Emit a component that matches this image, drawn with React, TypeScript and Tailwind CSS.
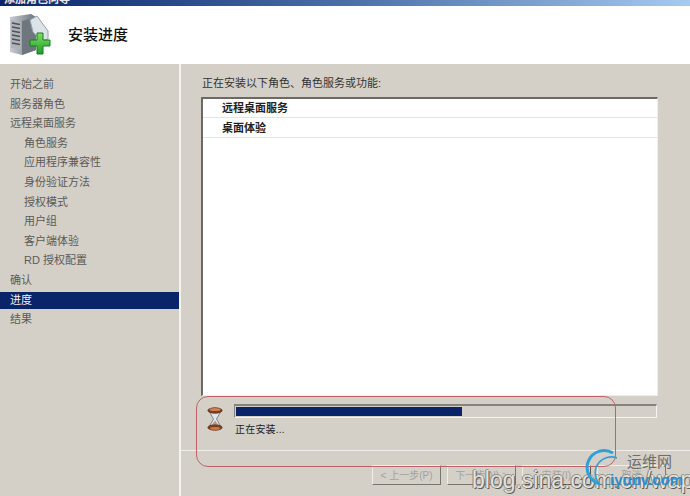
const FONT = "font-['Liberation_Sans','Noto_Sans_CJK_SC',sans-serif]";

function SideItem({ label, indent, active }: { label: string; indent?: boolean; active?: boolean }) {
  return (
    <div
      className={`text-[11px] whitespace-nowrap ${indent ? 'pl-6' : 'pl-2.5'} ${
        active
          ? 'h-[17px] leading-[17px] mt-[1px] mb-[1.6px] bg-[#0a246a] text-[#f2f2f2]'
          : 'h-[19.6px] leading-[19.6px] text-[#5c5a56]'
      }`}
    >
      {label}
    </div>
  );
}

function Btn({ label, bold }: { label: string; bold?: boolean }) {
  return (
    <div
      className={`w-[69px] h-[20px] flex items-center justify-center text-[10px] text-[#a3a19c] border-t border-l border-t-[#efede8] border-l-[#efede8] border-r border-b ${
        bold ? 'border-r-[#55544f] border-b-[#55544f]' : 'border-r-[#77766f] border-b-[#77766f]'
      } whitespace-nowrap`}
    >
      {label}
    </div>
  );
}

function ServerIcon() {
  return (
    <svg width="46" height="46" viewBox="0 0 46 46">
      <defs>
        <linearGradient id="s" x1="0" x2="1">
          <stop offset="0" stopColor="#c8ccd2" />
          <stop offset="1" stopColor="#6c7279" />
        </linearGradient>
        <linearGradient id="g" x1="0" y1="0" x2="0" y2="1">
          <stop offset="0" stopColor="#7fe05a" />
          <stop offset="1" stopColor="#1e9c2d" />
        </linearGradient>
      </defs>
      <path d="M1 5 L22 2 L27 5 L27 38 L13 43 L1 40 Z" fill="url(#s)" />
      <path d="M13 9 L27 5 L27 38 L13 43 Z" fill="#70767d" />
      <path d="M2 8 L12 10 L12 38 L2 36 Z" fill="#aeb3b9" />
      <path d="M3 11 L11 12.5 M3 15 L11 16.5 M3 19 L11 20.5 M3 23 L11 24.5 M3 27 L11 28.5 M3 31 L11 32.5" stroke="#4d5359" strokeWidth="1.4" />
      <path d="M21 8 L28 4 L39 19 L39 27 L32 29 L24 20 Z" fill="#dce3e8" stroke="#98a2ab" strokeWidth="1" />
      <path d="M27 21 H33 V28 H40 V34 H33 V42 H27 V34 H20 V28 H27 Z" transform="translate(1 0)" fill="url(#g)" stroke="#167a24" strokeWidth="1" />
    </svg>
  );
}

function Hourglass() {
  return (
    <svg width="16" height="24" viewBox="0 0 16 24">
      <path d="M2.5 5 L13.5 5 L9.5 12 L13.5 19 L2.5 19 L6.5 12 Z" fill="#dfe6ec" stroke="#7c868e" strokeWidth="1" />
      <path d="M5 17.5 L11 17.5 L8 13.5 Z" fill="#b89a6c" />
      <ellipse cx="8" cy="3.5" rx="7.5" ry="3.2" fill="#7a3d20" />
      <ellipse cx="8" cy="2.6" rx="5.5" ry="1.5" fill="#c9825a" />
      <ellipse cx="8" cy="20.5" rx="7.5" ry="3.2" fill="#7a3d20" />
      <ellipse cx="8" cy="21.5" rx="5" ry="1.4" fill="#c47c4c" />
    </svg>
  );
}

export default function App() {
  const items: [string, boolean?, boolean?][] = [
    ['开始之前'],
    ['服务器角色'],
    ['远程桌面服务'],
    ['角色服务', true],
    ['应用程序兼容性', true],
    ['身份验证方法', true],
    ['授权模式', true],
    ['用户组', true],
    ['客户端体验', true],
    ['RD 授权配置', true],
    ['确认'],
    ['进度', false, true],
    ['结果'],
  ];
  return (
    <div className={`${FONT} relative w-[690px] h-[496px] overflow-hidden flex flex-col bg-[#d4d0c8]`}>
      <div className="h-[6px] shrink-0 overflow-hidden bg-gradient-to-r from-[#0a246a] via-[#4a6fa8] to-[#a6caf0]">
        <div className="text-[11px] leading-[11px] font-bold text-[#e8e8e8] pl-1 -mt-[6px]">添加角色向导</div>
      </div>
      <div className="h-[58px] shrink-0 bg-white flex items-center pl-[9px] gap-[13px]">
        <ServerIcon />
        <div className="text-[15px] font-medium text-[#111] mt-[1px]">安装进度</div>
      </div>
      <div className="flex-1 flex min-h-0">
        <div className="w-[179px] shrink-0 pt-[11px] bg-[#d4d0c8]">
          {items.map(([l, ind, act]) => (
            <SideItem key={l} label={l} indent={ind} active={act} />
          ))}
        </div>
        <div className="w-[2px] shrink-0 bg-[#f4f3f0]" />
        <div className="flex-1 flex flex-col min-w-0">
          <div className="h-[33px] shrink-0 pl-[21px] pt-[12px] text-[11px] leading-[14px] text-[#333]">
            正在安装以下角色、角色服务或功能:
          </div>
          <div className="ml-[20px] w-[457px] h-[299px] shrink-0 bg-white border-t-2 border-l-2 border-t-[#6b6963] border-l-[#6b6963] border-r border-b border-r-[#eeeeea] border-b-[#eeeeea]">
            <div className="h-[19px] leading-[19px] pl-[19px] text-[11px] font-bold text-[#222] border-b border-[#dbe7ec]">远程桌面服务</div>
            <div className="h-[20px] leading-[20px] pl-[19px] text-[11px] font-bold text-[#222] border-b border-[#dbe7ec]">桌面体验</div>
          </div>
          <div className="flex pl-[26px] pt-[8px] h-[54px] shrink-0">
            <div className="mt-[3px]">
              <Hourglass />
            </div>
            <div className="ml-[11px] flex flex-col">
              <div className="w-[423px] h-[14px] border-t-2 border-l border-[#85837d] border-r border-b border-r-[#f4f3f0] border-b-[#f4f3f0] pl-[1px] pt-[1px]">
                <div className="h-[9px] w-[226px] bg-[#0a246a]" />
              </div>
              <div className="mt-[5px] ml-[1px] text-[10px] leading-[14px] text-[#222] tracking-[0.2px]">正在安装...</div>
            </div>
          </div>
          <div className="h-[1px] bg-[#f0efeb] shrink-0" />
          <div className="flex gap-[6px] pl-[191px] pt-[14px]">
            <Btn label="< 上一步(P)" />
            <Btn label="下一步(N) >" />
            <Btn label="安装(I)" bold />
            <Btn label="取消" />
          </div>
        </div>
      </div>

      <div className="absolute left-[196px] top-[396px] w-[420px] h-[71px] rounded-[12px] border border-[#bd6266]" />

      <div className="absolute left-[472px] top-[468px] text-[23px] leading-[24px] text-[#e4e2dc] font-['Liberation_Sans',sans-serif] [text-shadow:1px_1px_0_#605e5a,-1px_0_0_#85837d,0_-1px_0_#94928c] whitespace-nowrap">
        blog.sina.com.cn/wap
      </div>
      <svg className="absolute left-[585px] top-[448px]" width="40" height="42" viewBox="0 0 40 42" fill="none">
        <path d="M28 5 A17 17 0 1 0 15 36" stroke="#2f9fd8" strokeWidth="3" />
        <path d="M32 10 A16 16 0 0 0 13 34" stroke="#2f9fd8" strokeWidth="1.5" />
      </svg>
      <div className="absolute left-[627px] top-[454px] text-[15px] leading-[16px] text-[#6e6d68] whitespace-nowrap">运维网</div>
      <div className="absolute left-[610px] top-[472px] text-[15px] leading-[16px] font-bold text-[#2a8ed0] whitespace-nowrap">iyunv.com</div>
    </div>
  );
}
